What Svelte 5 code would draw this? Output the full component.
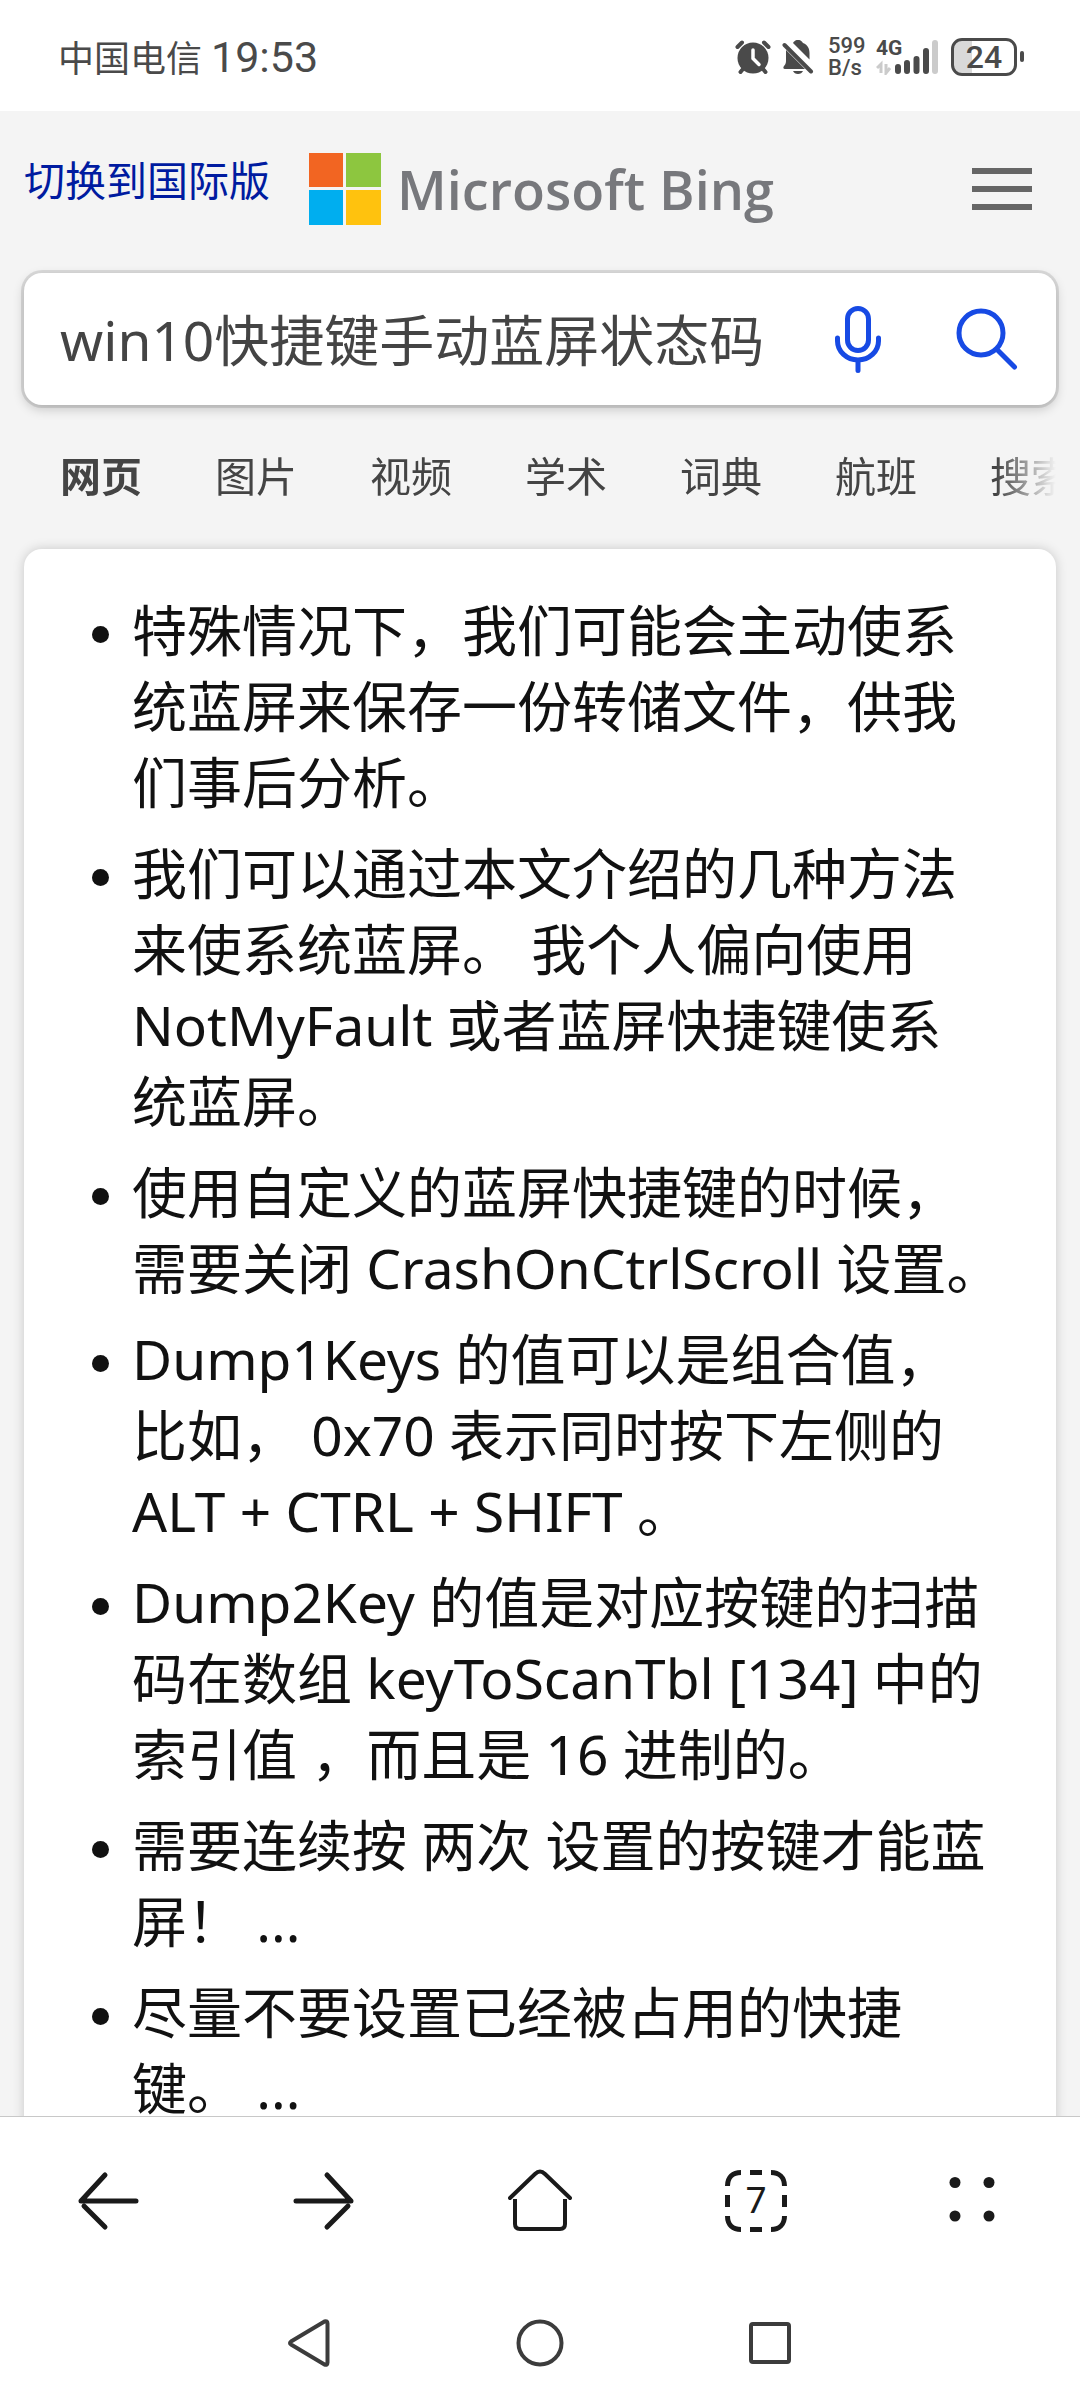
<script>
  const tabs = ['网页', '图片', '视频', '学术', '词典', '航班', '搜索'];
  const points = [
    '特殊情况下，我们可能会主动使系统蓝屏来保存一份转储文件，供我们事后分析。',
    '我们可以通过本文介绍的几种方法来使系统蓝屏。 我个人偏向使用 NotMyFault 或者蓝屏快捷键使系\n统蓝屏。',
    '使用自定义的蓝屏快捷键的时候，需要关闭 CrashOnCtrlScroll 设置。',
    'Dump1Keys 的值可以是组合值，\n比如， 0x70 表示同时按下左侧的 ALT + CTRL + SHIFT 。',
    'Dump2Key 的值是对应按键的扫描码在数组 keyToScanTbl [134] 中的索引值 ，而且是 16 进制的。',
    '需要连续按 两次 设置的按键才能蓝屏！ ...',
    '尽量不要设置已经被占用的快捷键。 ...'
  ];
  let query = $state('win10快捷键手动蓝屏状态码');
</script>

<div class="screen" lang="zh-CN">
  <div class="status">
    <span class="carrier">中国电信</span>
    <span class="clock">19:53</span>
    <div class="indicators">
      <svg class="alarm" viewBox="0 0 36 36" width="36" height="36">
        <g stroke="#4a4a4a" stroke-width="4" stroke-linecap="round" fill="none">
          <path d="M2.500 8 7 3.500M29 3.500 33.500 8M8 30 5.500 33M28 30 30.500 33" />
        </g>
        <circle cx="18" cy="19" r="15.500" fill="#4a4a4a" />
        <path d="M18 11v8.500l6 6" fill="none" stroke="#fff" stroke-width="3.500" stroke-linecap="round" stroke-linejoin="round" />
      </svg>
      <svg class="mute" viewBox="0 0 32 36" width="32" height="36">
        <path d="M11 4C12 3 12.500 1 16 1s4 2 5 3c5 2 6.500 6 6.500 10v6.500zM4 11 23 30H3c-2 0-2-2-1-3 2-2 2-4 2-6zM11 32h10c-1 2-2.500 3-5 3s-4-1-5-3z" fill="#4a4a4a" />
        <path d="M2.500 6 29 32.500" stroke="#4a4a4a" stroke-width="4" stroke-linecap="round" />
      </svg>
      <span class="rate"><span>599</span><span>B/s</span></span>
      <span class="signal">
        <span class="gen">4G</span>
        <svg viewBox="0 0 63 36" width="63" height="36">
          <path d="M5 34V25L1 29M10 25v9l4-5" fill="none" stroke="#cbcbcb" stroke-width="3" />
          <g stroke="#4a4a4a" stroke-width="6" stroke-linecap="round">
            <path d="M22 28v4M31 24v8M40.500 20v12M50 12v20" />
            <path d="M59 4v28" stroke="#cbcbcb" />
          </g>
        </svg>
      </span>
      <span class="battery"><span class="level">24</span></span>
    </div>
  </div>

  <main class="page">
    <header class="top">
      <a class="switch" href="#intl">切换到国际版</a>
      <a class="brand" href="#home">
        <svg viewBox="0 0 72 72" width="72" height="72" aria-hidden="true">
          <path d="M0 0h34v34H0z" fill="#f26522" />
          <path d="M37 0h35v34H37z" fill="#8dc63f" />
          <path d="M0 37h34v35H0z" fill="#00aeef" />
          <path d="M37 37h35v35H37z" fill="#ffc20e" />
        </svg>
        <span>Microsoft Bing</span>
      </a>
      <button class="menu" aria-label="菜单"><i></i><i></i><i></i></button>
    </header>

    <form class="search" onsubmit={(e) => e.preventDefault()}>
      <input type="text" aria-label="搜索" bind:value={query} />
      <button type="button" aria-label="语音搜索">
        <svg viewBox="0 0 66 72" width="66" height="72" fill="none" stroke="#174ae4" stroke-width="5" stroke-linecap="round">
          <rect x="22.500" y="5.500" width="21" height="42" rx="10.500" />
          <path d="M12.500 35v3a20.500 19 0 0 0 41 0v-3M33 57.500V67.500" />
        </svg>
      </button>
      <button type="submit" aria-label="提交">
        <svg viewBox="0 0 66 72" width="66" height="72" fill="none" stroke="#174ae4" stroke-width="5" stroke-linecap="round">
          <circle cx="27" cy="30" r="22" />
          <path d="M43.500 47 60.500 64" />
        </svg>
      </button>
    </form>

    <nav class="tabs">
      {#each tabs as tab, i}
        <a href="#tab" class:active={i === 0}>{tab}</a>
      {/each}
    </nav>

    <article class="card">
      <ul>
        {#each points as point}
          <li>{point}</li>
        {/each}
      </ul>
    </article>
  </main>

  <nav class="toolbar">
    <button aria-label="后退">
      <svg viewBox="0 0 64 64" width="64" height="64" fill="none" stroke="#1a1a1a" stroke-width="5" stroke-linecap="round" stroke-linejoin="round">
        <path d="M60 32H5L29 6" /><path d="M29 58 8 37" />
      </svg>
    </button>
    <button aria-label="前进">
      <svg viewBox="0 0 64 64" width="64" height="64" fill="none" stroke="#1a1a1a" stroke-width="5" stroke-linecap="round" stroke-linejoin="round">
        <path d="M4 32h55L35 6" /><path d="M35 58 56 37" />
      </svg>
    </button>
    <button aria-label="主页">
      <svg viewBox="0 0 64 64" width="64" height="64" fill="none" stroke="#1a1a1a" stroke-width="4" stroke-linecap="round">
        <path d="M2 29 27 5Q32 0 37 5L62 29" />
        <path d="M7 30v25q0 5 5 5h40q5 0 5-5V30" stroke-linecap="butt" />
      </svg>
    </button>
    <button class="count" aria-label="标签页">
      <svg viewBox="0 0 64 64" width="64" height="64" fill="none" stroke="#1a1a1a" stroke-width="5">
        <path d="M3.500 17C3.500 8 9 3.500 17 3.500M26 3.500h12M47 3.500c8 0 13.500 5 13.500 13.500M60.500 26v12M60.500 47c0 8-5 13.500-13.500 13.500M38 60.500H26M17 60.500C9 60.500 3.500 56 3.500 47M3.500 38V26" />
      </svg>
      <span>7</span>
    </button>
    <button aria-label="更多">
      <svg viewBox="0 0 64 64" width="64" height="64" fill="#1a1a1a">
        <circle cx="15" cy="13.500" r="5.500" /><circle cx="49" cy="13.500" r="5.500" />
        <circle cx="15" cy="47" r="5.500" /><circle cx="49" cy="47" r="5.500" />
      </svg>
    </button>
  </nav>

  <nav class="system">
    <button aria-label="返回">
      <svg viewBox="0 0 50 50" width="50" height="50" fill="none" stroke="#3c3c3c" stroke-width="4" stroke-linejoin="round">
        <path d="M6 23.500 39.500 3.500q3-1 3 2v39q0 3-3 2L6 26.500q-2-1.500 0-3z" />
      </svg>
    </button>
    <button aria-label="桌面">
      <svg viewBox="0 0 50 50" width="50" height="50" fill="none" stroke="#3c3c3c" stroke-width="4">
        <circle cx="25" cy="25" r="21.500" />
      </svg>
    </button>
    <button aria-label="最近任务">
      <svg viewBox="0 0 50 50" width="50" height="50" fill="none" stroke="#3c3c3c" stroke-width="4">
        <rect x="6" y="6" width="38" height="38" rx="2" />
      </svg>
    </button>
  </nav>
</div>

<style>
  :global(body) {
    background: #fff;
    font-family: 'Noto Sans', 'Noto Sans CJK SC', sans-serif;
  }

  .screen {
    display: flex;
    flex-direction: column;
    height: 100vh;
  }

  button {
    display: flex;
    align-items: center;
    justify-content: center;
    padding: 0;
    border: 0;
    background: none;
    font: inherit;
    color: inherit;
  }

  a {
    color: inherit;
    text-decoration: none;
  }

  svg {
    display: block;
    flex: none;
  }

  .status {
    display: flex;
    align-items: center;
    flex: none;
    height: 111px;
    padding: 2px 56px 0 58px;
    box-sizing: border-box;
    color: #4a4a4a;
  }

  .carrier {
    font-size: 36px;
  }

  .clock {
    margin-left: 9px;
    font-family: Roboto, sans-serif;
    font-size: 43px;
  }

  .indicators {
    display: flex;
    align-items: center;
    margin-left: auto;
    font-family: Roboto, sans-serif;
    font-weight: 500;
  }

  .mute {
    margin-left: 11px;
  }

  .rate {
    display: flex;
    flex-direction: column;
    width: 36px;
    margin-left: 14px;
    font-size: 22px;
    line-height: 22px;
  }

  .signal {
    position: relative;
    margin-left: 12px;
  }

  .gen {
    position: absolute;
    left: 0;
    top: 0;
    font-size: 21px;
    line-height: 18px;
    font-weight: 700;
  }

  .battery {
    display: flex;
    align-items: center;
  }

  .level {
    width: 60px;
    margin-left: 12px;
    border: 3px solid #4a4a4a;
    border-radius: 11px;
    background: linear-gradient(90deg, #d9d9d9 30%, #fff 30%);
    font-size: 32px;
    line-height: 32px;
    text-align: center;
  }

  .battery::after {
    content: '';
    width: 4px;
    height: 11px;
    margin-left: 3px;
    border-radius: 2px;
    background: #4a4a4a;
  }

  .page {
    flex: 1;
    min-height: 0;
    overflow: hidden;
    background: #f4f4f4;
  }

  .top {
    display: flex;
    align-items: center;
    height: 156px;
    padding: 0 48px 0 24px;
  }

  .switch {
    padding-bottom: 18px;
    font-size: 41px;
    line-height: 60px;
    color: #001ba0;
  }

  .brand {
    display: flex;
    align-items: center;
    gap: 16px;
    margin-left: 39px;
    font-family: 'Open Sans', sans-serif;
    font-size: 54px;
    font-weight: 600;
    line-height: 72px;
    color: #77787c;
  }

  .menu {
    flex-direction: column;
    gap: 12px;
    margin-left: auto;
  }

  .menu i {
    width: 60px;
    height: 6px;
    background: #666;
  }

  .search {
    display: flex;
    align-items: center;
    gap: 63px;
    height: 132px;
    margin: 6px 24px 0;
    padding: 0 36px;
    border-radius: 18px;
    background: #fff;
    box-shadow: 0 0 0 3px rgba(0, 0, 0, 0.1), 0 4px 12px rgba(0, 0, 0, 0.2);
  }

  .search input {
    flex: 1;
    min-width: 0;
    padding: 2px 0 0;
    border: 0;
    outline: 0;
    background: none;
    font: inherit;
    font-size: 55px;
    line-height: 76px;
    color: #444;
  }

  .tabs {
    display: flex;
    gap: 73px;
    margin: 0 24px;
    padding: 41px 0 42px 36px;
    overflow: hidden;
    font-size: 41px;
    line-height: 61px;
    white-space: nowrap;
    color: #444;
    mask-image: linear-gradient(90deg, #000 calc(100% - 60px), transparent);
  }

  .active {
    font-weight: 700;
  }

  .card {
    margin: 0 24px;
    padding: 43px 52px 44px 108px;
    border-radius: 18px;
    background: #fff;
    box-shadow: 0 0 12px rgba(0, 0, 0, 0.18);
  }

  ul {
    display: flex;
    flex-direction: column;
    gap: 15px;
    margin: 0;
    padding: 0;
    list-style: none;
  }

  li {
    position: relative;
    font-size: 55px;
    line-height: 76px;
    white-space: pre-line;
    color: #111;
  }

  li::before {
    content: '';
    position: absolute;
    left: -40px;
    top: 34px;
    width: 17px;
    height: 17px;
    border-radius: 50%;
    background: #111;
  }

  .toolbar {
    display: grid;
    grid-template-columns: repeat(5, 1fr);
    flex: none;
    height: 168px;
    border-top: 1px solid #c8c8c8;
    color: #1a1a1a;
  }

  .count {
    display: grid;
    place-items: center;
    place-content: center;
  }

  .count > * {
    grid-area: 1 / 1;
  }

  .count span {
    font-size: 37px;
    line-height: 40px;
    padding-bottom: 4px;
  }

  .system {
    display: grid;
    grid-template-columns: repeat(3, 1fr);
    flex: none;
    height: 115px;
    padding: 0 195px;
  }
</style>
